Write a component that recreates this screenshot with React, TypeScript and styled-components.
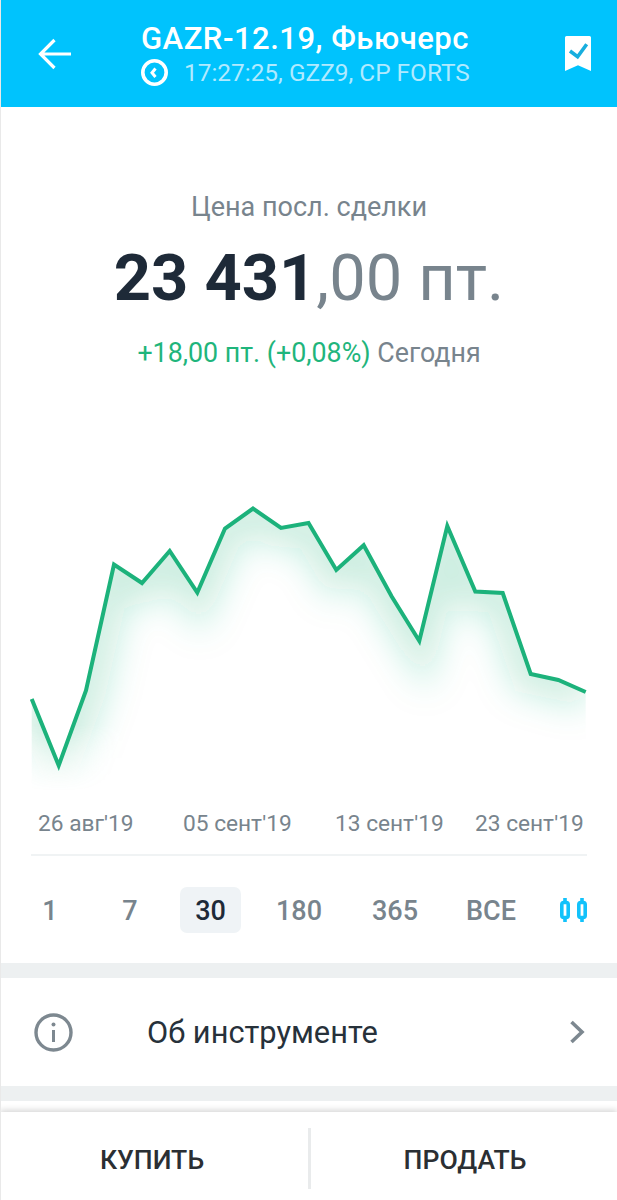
import React, { FC } from "react";
import styled, { createGlobalStyle } from "styled-components";

const GlobalStyle = createGlobalStyle`
  html, body {
    margin: 0;
    padding: 0;
    background: #fff;
  }
  * {
    box-sizing: border-box;
  }
`;

const linePoints: [number, number][] = [
  [31.7, 199], [58.7, 265.5], [86, 190.5], [114, 64.5], [142, 83], [169.7, 51],
  [197.3, 92.5], [225, 28.5], [253, 8.5], [281, 28], [308.5, 23], [336.3, 70],
  [363.7, 45.3], [391.7, 96.5], [419.3, 141], [447.3, 26], [475.3, 91.5],
  [502.7, 93], [530.7, 174], [558.3, 180], [585.7, 192],
];

const linePath = linePoints.map(([x, y]) => `${x},${y}`).join(" ");
const areaPath = `${linePath} 585.7,300 31.7,300`;

const periods = ["1", "7", "30", "180", "365", "ВСЕ"];
const dates = ["26 авг'19", "05 сент'19", "13 сент'19", "23 сент'19"];

const PriceChart: FC = () => (
  <ChartSvg viewBox="0 0 617 300" width="617" height="300">
    <defs>
      <clipPath id="area-clip">
        <polygon points={areaPath} />
      </clipPath>
      <filter id="soft" x="-20%" y="-40%" width="140%" height="180%">
        <feGaussianBlur stdDeviation="17" />
      </filter>
      <linearGradient id="fade" x1="0" y1="0" x2="0" y2="300" gradientUnits="userSpaceOnUse">
        <stop offset="0.75" stopColor="#fff" />
        <stop offset="0.97" stopColor="#000" />
      </linearGradient>
      <mask id="fade-mask" maskUnits="userSpaceOnUse" x="0" y="0" width="617" height="300">
        <rect width="617" height="300" fill="url(#fade)" />
      </mask>
    </defs>
    <g mask="url(#fade-mask)">
      <g clipPath="url(#area-clip)">
        <polyline
          points={linePath}
          fill="none"
          stroke="#1fb57c"
          strokeOpacity="0.23"
          strokeWidth="40"
          filter="url(#soft)"
        />
      </g>
    </g>
    <polyline
      points={linePath}
      fill="none"
      stroke="#1cb27b"
      strokeWidth="4"
      strokeLinejoin="miter"
    />
  </ChartSvg>
);

const App: FC = () => {
  return (
    <>
      <GlobalStyle />
      <Page>
        <Header>
          <IconSlot>
            <svg width="34" height="32" viewBox="0 0 34 32" fill="none">
              <path
                d="M33 16H3M16.5 2L2.5 16L16.5 30"
                stroke="#fff"
                strokeWidth="3.2"
              />
            </svg>
          </IconSlot>
          <HeaderText>
            <Title>GAZR-12.19, Фьючерс</Title>
            <SubTitle>
              <svg width="27" height="27" viewBox="0 0 27 27" fill="none">
                <circle cx="13.5" cy="13.5" r="11.7" stroke="#fff" strokeWidth="3.6" />
                <path d="M14.5 9.5L11 13.8L14.5 18" stroke="#fff" strokeWidth="3" />
              </svg>
              <span>17:27:25, GZZ9, CP FORTS</span>
            </SubTitle>
          </HeaderText>
          <BookmarkSlot>
            <svg width="26" height="35" viewBox="0 0 26 35" fill="none">
              <path
                fill="#fff"
                d="M1.5 0H24.5A1.5 1.5 0 0 1 26 1.5V35L13 29.3L0 35V1.5A1.5 1.5 0 0 1 1.5 0Z"
              />
              <path d="M5 15L12.6 20.7L21.7 8.3" stroke="#17aede" strokeWidth="3.6" />
            </svg>
          </BookmarkSlot>
        </Header>

        <PriceBlock>
          <PriceLabel>Цена посл. сделки</PriceLabel>
          <Price>
            <strong>23 431</strong>
            <span>,00 пт.</span>
          </Price>
          <Change>
            <em>+18,00 пт. (+0,08%)</em> Сегодня
          </Change>
        </PriceBlock>

        <PriceChart />

        <DatesRow>
          {dates.map((d) => (
            <span key={d}>{d}</span>
          ))}
        </DatesRow>

        <PeriodRow>
          {periods.map((p) => (
            <Period key={p} $active={p === "30"}>
              {p}
            </Period>
          ))}
          <CandleIcon width="27" height="24" viewBox="0 0 27 24" fill="none">
            <path d="M5 0V24M22 0V24" stroke="#12c2fb" strokeWidth="3.6" />
            <rect x="1.8" y="4.5" width="6.4" height="15" rx="2" stroke="#12c2fb" strokeWidth="3.6" fill="#fff" />
            <rect x="18.8" y="4.5" width="6.4" height="15" rx="2" stroke="#12c2fb" strokeWidth="3.6" fill="#fff" />
          </CandleIcon>
        </PeriodRow>

        <Band />

        <InfoRow>
          <svg width="39" height="39" viewBox="0 0 39 39" fill="none">
            <circle cx="19.5" cy="19.5" r="17.5" stroke="#7d8890" strokeWidth="3.4" />
            <path d="M19.5 17V29" stroke="#7d8890" strokeWidth="3" />
            <circle cx="19.5" cy="11.5" r="2" fill="#7d8890" />
          </svg>
          <InfoText>Об инструменте</InfoText>
          <svg width="16" height="24" viewBox="0 0 16 24" fill="none">
            <path d="M2.5 2L13 12L2.5 22" stroke="#7d8890" strokeWidth="3.6" />
          </svg>
        </InfoRow>

        <Band />
        <Gap />

        <BottomBar>
          <ActionButton>КУПИТЬ</ActionButton>
          <Divider />
          <ActionButton>ПРОДАТЬ</ActionButton>
        </BottomBar>
      </Page>
    </>
  );
};

export default App;

const Page = styled.div`
  width: 617px;
  height: 1200px;
  overflow: hidden;
  background: #fff;
  border-left: 1px solid #e9e9e9;
  font-family: Roboto, "Noto Sans", sans-serif;
  display: flex;
  flex-direction: column;
`;

const Header = styled.header`
  height: 107px;
  margin-left: -1px;
  background: #00c3fd;
  display: flex;
  align-items: center;
  color: #fff;
  flex-shrink: 0;
`;

const IconSlot = styled.div`
  width: 141px;
  padding-left: 38px;
  display: flex;
`;

const HeaderText = styled.div`
  flex: 1;
  display: flex;
  flex-direction: column;
`;

const Title = styled.div`
  font-size: 31px;
  line-height: 36px;
  font-weight: 500;
  letter-spacing: 0.5px;
  white-space: nowrap;
`;

const SubTitle = styled.div`
  display: flex;
  align-items: center;
  gap: 16px;
  font-size: 24.4px;
  line-height: 27px;
  margin-top: 2px;
  color: #b0eaff;
  white-space: nowrap;

  svg {
    flex-shrink: 0;
  }
`;

const BookmarkSlot = styled.div`
  width: 52px;
  display: flex;
`;

const PriceBlock = styled.section`
  height: 393px;
  padding-top: 84px;
  display: flex;
  flex-direction: column;
  align-items: center;
  flex-shrink: 0;
`;

const PriceLabel = styled.div`
  font-size: 27px;
  line-height: 32px;
  color: #78848d;
`;

const Price = styled.div`
  margin-top: 15px;
  font-size: 65px;
  line-height: 80px;
  white-space: nowrap;

  strong {
    font-weight: 700;
    color: #1e2a38;
  }

  span {
    font-weight: 400;
    color: #78848d;
  }
`;

const Change = styled.div`
  margin-top: 20px;
  font-size: 26.8px;
  line-height: 30px;
  color: #78848d;

  em {
    font-style: normal;
    color: #1fb57c;
  }
`;

const ChartSvg = styled.svg`
  display: block;
  margin-left: -1px;
  flex-shrink: 0;
`;

const DatesRow = styled.div`
  height: 56px;
  margin: 0 30px;
  padding: 9px 0 0 7px;
  display: grid;
  grid-template-columns: 145px 152px 140px auto;
  font-size: 22.7px;
  line-height: 30px;
  color: #78848d;
  border-bottom: 2px solid #f0f3f4;
  white-space: nowrap;
  flex-shrink: 0;
`;

const PeriodRow = styled.div`
  height: 107px;
  padding: 31px 30px 0 9px;
  display: grid;
  grid-template-columns: 80px 80px 78px 102px 90px 102px 1fr;
  align-items: start;
  flex-shrink: 0;
`;

const Period = styled.div<{ $active?: boolean }>`
  width: ${({ $active }) => ($active ? "61px" : "auto")};
  height: 46px;
  margin-left: ${({ $active }) => ($active ? "10px" : "0")};
  text-align: center;
  font-size: 27px;
  font-weight: 500;
  line-height: 48px;
  border-radius: 7px;
  color: ${({ $active }) => ($active ? "#1e2a38" : "#78848d")};
  background: ${({ $active }) => ($active ? "#eff3f6" : "transparent")};
`;

const CandleIcon = styled.svg`
  justify-self: end;
  margin-top: 11px;
`;

const Band = styled.div`
  height: 15px;
  margin-left: -1px;
  background: #edf0f1;
  flex-shrink: 0;
`;

const Gap = styled.div`
  height: 11px;
  flex-shrink: 0;
`;

const InfoRow = styled.div`
  height: 108px;
  padding: 0 32px 0 33px;
  display: flex;
  align-items: center;
  flex-shrink: 0;
`;

const InfoText = styled.div`
  flex: 1;
  padding-left: 74px;
  font-size: 30.8px;
  color: #27313a;
`;

const BottomBar = styled.div`
  flex: 1;
  margin-left: -1px;
  background: #fff;
  box-shadow: 0 -2px 6px rgba(0, 0, 0, 0.16);
  display: flex;
  align-items: center;
  position: relative;
`;

const ActionButton = styled.div`
  flex: 1;
  text-align: center;
  font-size: 26.6px;
  font-weight: 500;
  color: #2b2f33;
  padding-top: 6px;

  &:first-child {
    padding-right: 4px;
  }

  &:last-child {
    padding-left: 2px;
  }
`;

const Divider = styled.div`
  width: 3px;
  height: 61px;
  margin-top: 5px;
  background: #e9ebec;
`;
